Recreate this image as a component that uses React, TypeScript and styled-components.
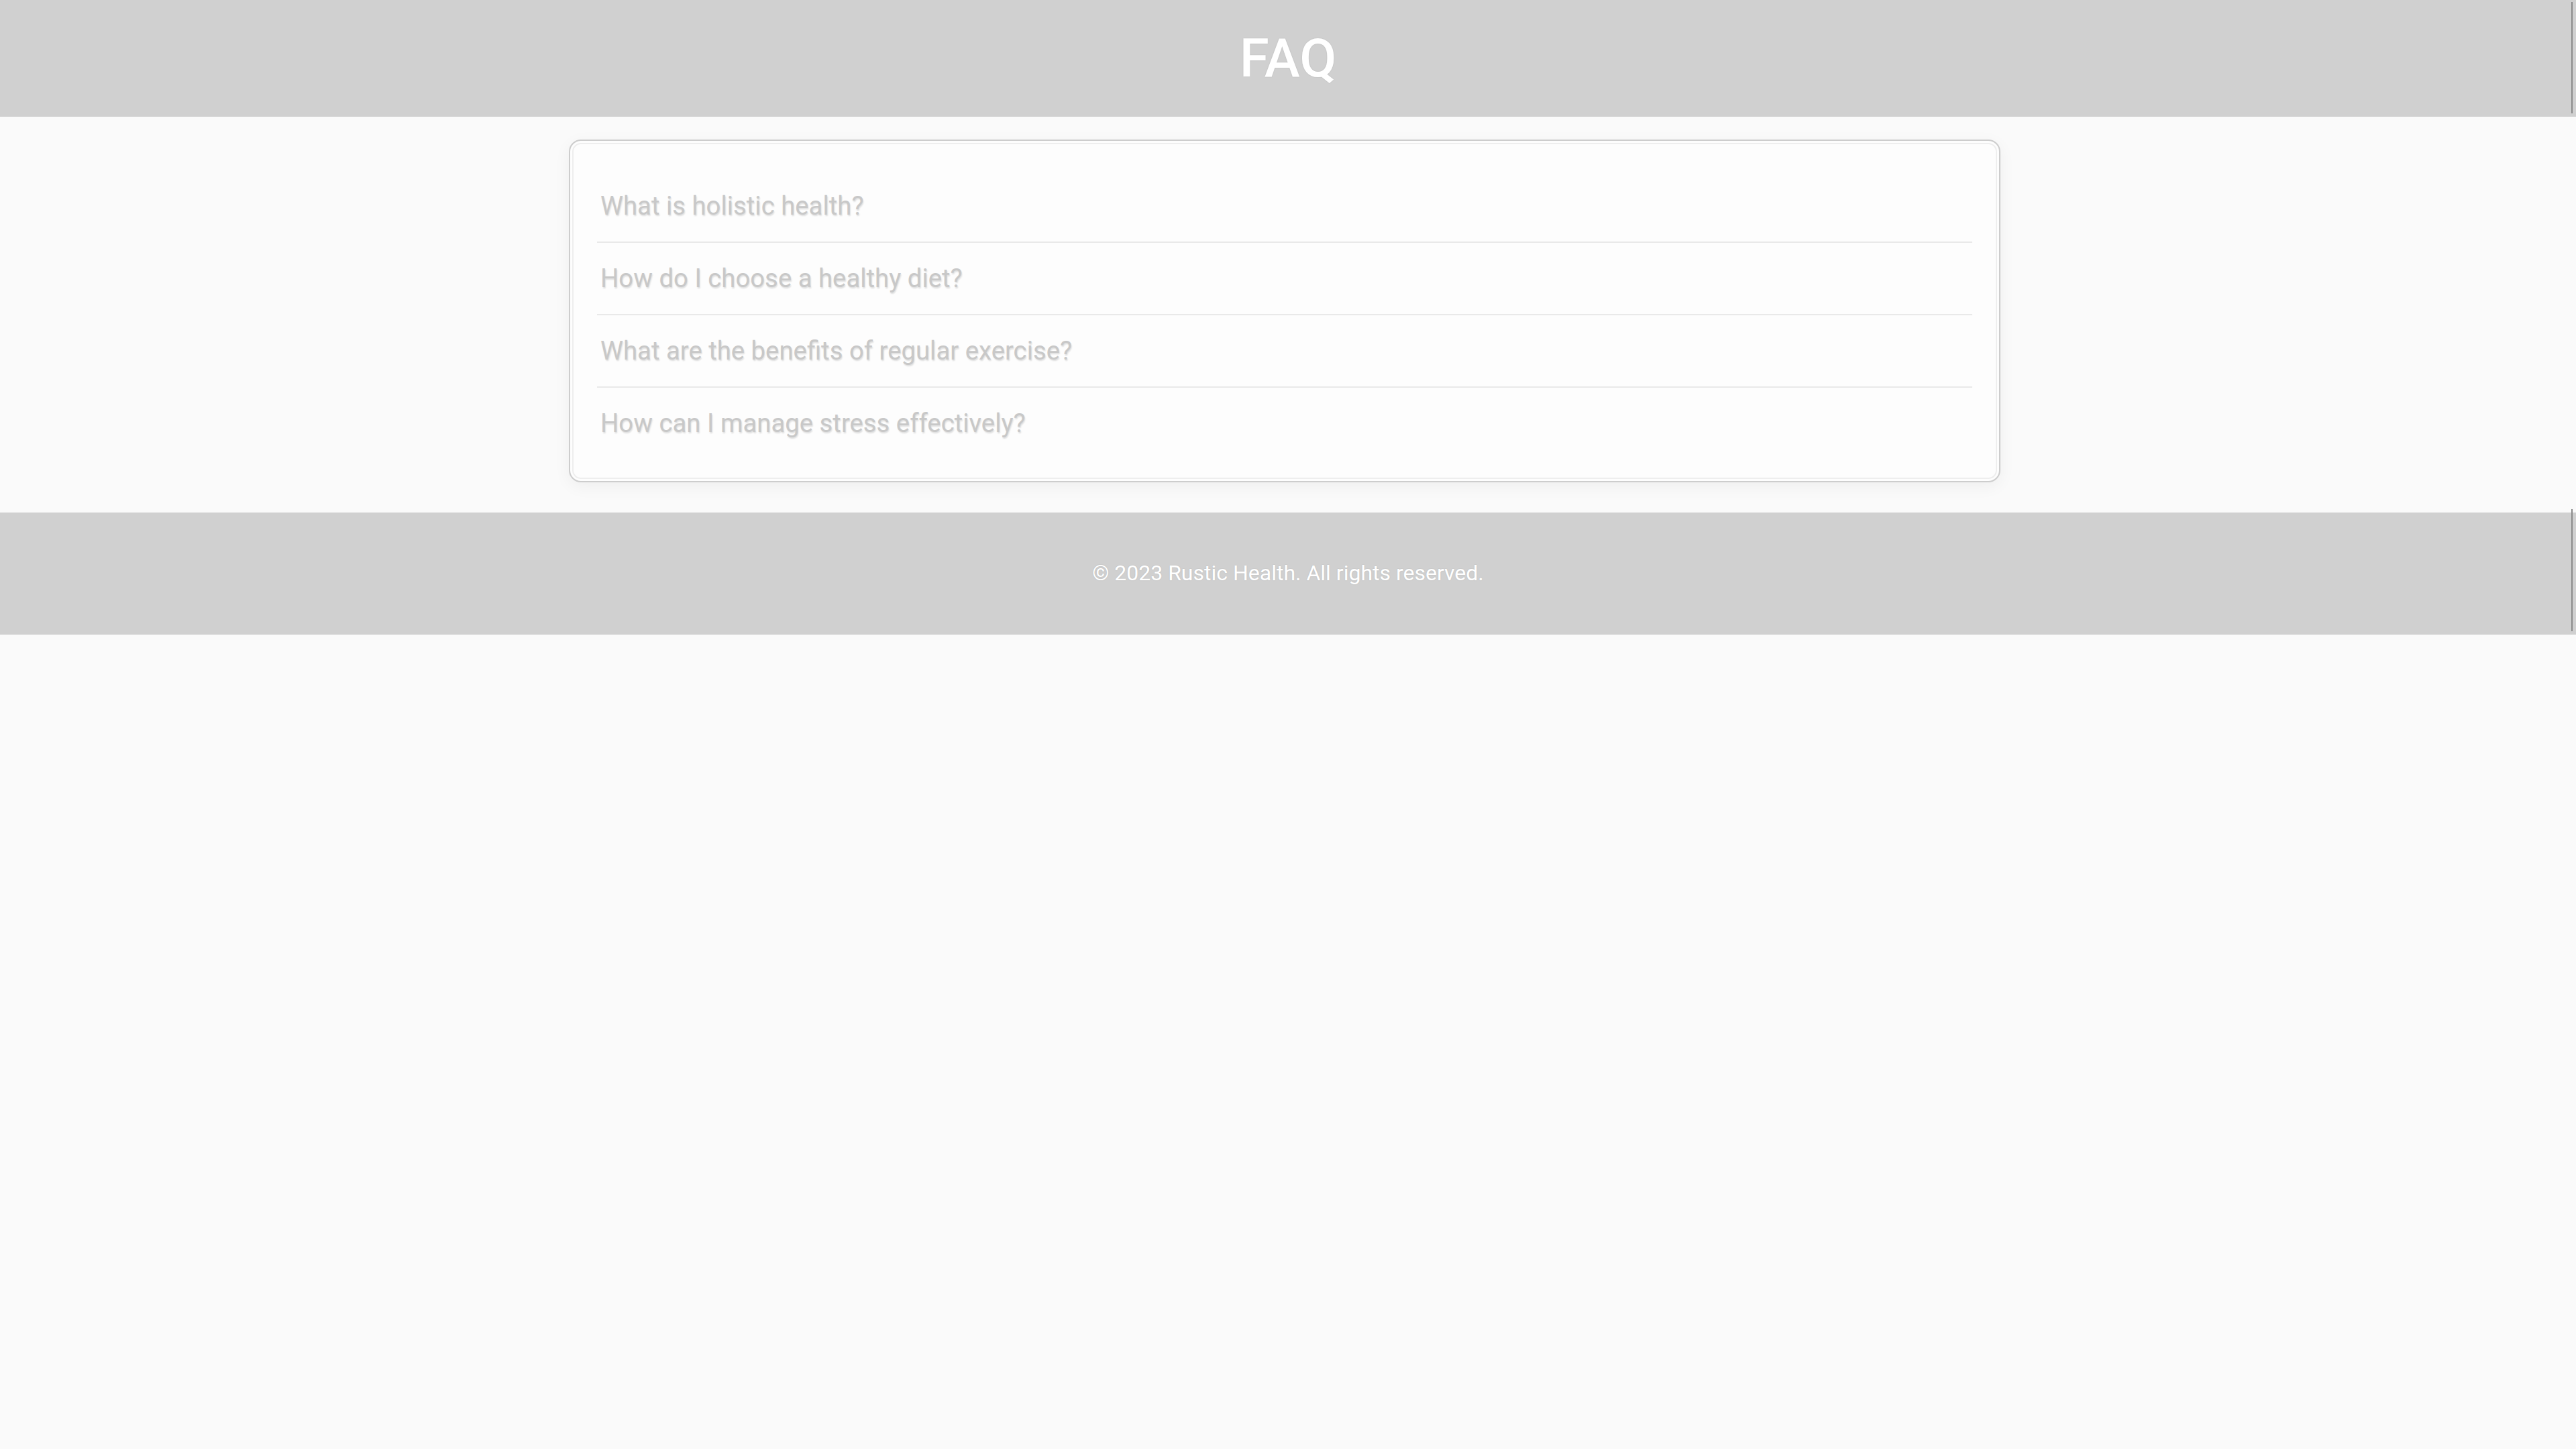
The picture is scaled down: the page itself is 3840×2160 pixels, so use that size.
import React from "react";
import styled, { createGlobalStyle } from "styled-components";

const GlobalStyle = createGlobalStyle`
  html, body {
    margin: 0;
    padding: 0;
    background: #fafafa;
    font-family: Roboto, "Liberation Sans", Arial, sans-serif;
  }
  * { box-sizing: border-box; }
`;

const Page = styled.div`
  display: flex;
  flex-direction: column;
  min-height: 2160px;
  background: #fafafa;
`;

const Header = styled.header`
  position: relative;
  background: #d0d0d0;
  padding: 40px 0;
  text-align: center;
  &::after {
    content: "";
    position: absolute;
    right: 5px;
    top: 3px;
    bottom: 5px;
    width: 2px;
    background: #8a8a8a;
  }
`;

const Title = styled.h1`
  margin: 0;
  font-size: 80px;
  line-height: 94px;
  font-weight: 500;
  color: #ffffff;
  text-shadow: 0 0 2px rgba(0, 0, 0, 0.12);
`;

const Main = styled.main`
  display: flex;
  justify-content: center;
  padding: 34px 10px 45px 0;
`;

const Card = styled.section`
  width: 2134px;
  background: #fdfdfd;
  border: 2px solid #cdcdcd;
  border-radius: 18px;
  padding: 44px 40px 33px;
  box-shadow: inset 0 0 0 3px #fdfdfd, inset 0 0 0 5px #eeeeee,
    0 6px 24px rgba(0, 0, 0, 0.05);
  display: flex;
  flex-direction: column;
`;

const Item = styled.div<{ $last?: boolean }>`
  padding: 30px 0;
  border-bottom: ${(p) => (p.$last ? "none" : "2px solid #e9e9e9")};
`;

const Question = styled.h3`
  margin: 0;
  padding-left: 5px;
  font-size: 38.3px;
  line-height: 46px;
  font-weight: 400;
  color: #c8c8c8;
  text-shadow: 1px 2px 2px rgba(0, 0, 0, 0.12);
`;

const Footer = styled.footer`
  position: relative;
  background: #d0d0d0;
  padding: 40px 0;
  text-align: center;
  &::after {
    content: "";
    position: absolute;
    right: 5px;
    top: -5px;
    bottom: 5px;
    width: 2px;
    background: #8a8a8a;
  }
`;

const FooterText = styled.p`
  margin: 32px 0;
  font-size: 32px;
  line-height: 37.5px;
  color: #ffffff;
  text-shadow: 0 0 2px rgba(0, 0, 0, 0.12);
`;

const questions = [
  "What is holistic health?",
  "How do I choose a healthy diet?",
  "What are the benefits of regular exercise?",
  "How can I manage stress effectively?",
];

export default function App() {
  return (
    <>
      <GlobalStyle />
      <Page>
        <Header>
          <Title>FAQ</Title>
        </Header>
        <Main>
          <Card>
            {questions.map((q, i) => (
              <Item key={q} $last={i === questions.length - 1}>
                <Question>{q}</Question>
              </Item>
            ))}
          </Card>
        </Main>
        <Footer>
          <FooterText>© 2023 Rustic Health. All rights reserved.</FooterText>
        </Footer>
      </Page>
    </>
  );
}
